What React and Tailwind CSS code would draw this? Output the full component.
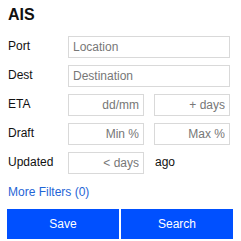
export default function App() {
    const rows = [
        { label: 'Port', type: 'full', placeholder: 'Location' },
        { label: 'Dest', type: 'full', placeholder: 'Destination' },
        { label: 'ETA', type: 'pair', left: 'dd/mm', right: '+ days' },
        { label: 'Draft', type: 'pair', left: 'Min %', right: 'Max %' },
    ];

    const inputCls = "h-[22px] border border-[#d9d9d9] bg-white px-[4px] text-[12px] text-[#222] placeholder:text-[#777] outline-none";

    return (
        <div className="w-[241px] h-[241px] bg-white pt-[6px] pl-[7px] pr-[8px] font-['Liberation_Sans',Arial,sans-serif] text-[#111]">
            <h1 className="text-[16px] leading-[18px] font-bold pl-px mb-[12px]">AIS</h1>

            <div className="flex flex-col gap-[7px]">
                {rows.map((row) => (
                    <div key={row.label} className="flex items-center">
                        <label className="w-[61px] pl-px text-[12px] leading-[14px] -mt-[2px]">{row.label}</label>
                        {row.type === 'full' ? (
                            <input className={`${inputCls} w-[162px]`} placeholder={row.placeholder} />
                        ) : (
                            <div className="grid grid-cols-2 gap-[10px] w-[162px]">
                                <input className={`${inputCls} w-full text-right`} placeholder={row.left} />
                                <input className={`${inputCls} w-full text-right`} placeholder={row.right} />
                            </div>
                        )}
                    </div>
                ))}

                {/* Updated row */}
                <div className="flex items-center">
                    <label className="w-[61px] pl-px text-[12px] leading-[14px] -mt-[2px]">Updated</label>
                    <div className="grid grid-cols-2 gap-[10px] w-[162px] items-center">
                        <input className={`${inputCls} w-full text-right`} placeholder="< days" />
                        <span className="pl-px text-[12px] leading-[14px] -mt-[2px]">ago</span>
                    </div>
                </div>
            </div>

            <a href="#" className="block mt-[10px] pl-px text-[12px] leading-[16px] text-[#1f65d6]">More Filters (0)</a>

            <div className="flex gap-[2px] mt-[9px]">
                <button className="w-[112px] h-[30px] bg-[#0050ff] text-white text-[12px]">Save</button>
                <button className="w-[112px] h-[30px] bg-[#0050ff] text-white text-[12px]">Search</button>
            </div>
        </div>
    );
}
